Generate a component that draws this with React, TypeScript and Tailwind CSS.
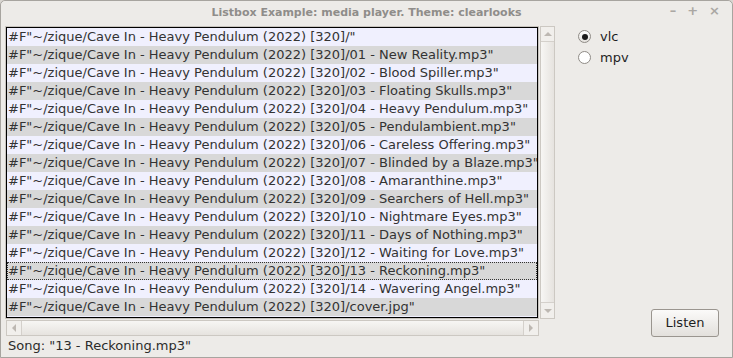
const SONGS = [
  "",
  "01 - New Reality.mp3",
  "02 - Blood Spiller.mp3",
  "03 - Floating Skulls.mp3",
  "04 - Heavy Pendulum.mp3",
  "05 - Pendulambient.mp3",
  "06 - Careless Offering.mp3",
  "07 - Blinded by a Blaze.mp3",
  "08 - Amaranthine.mp3",
  "09 - Searchers of Hell.mp3",
  "10 - Nightmare Eyes.mp3",
  "11 - Days of Nothing.mp3",
  "12 - Waiting for Love.mp3",
  "13 - Reckoning.mp3",
  "14 - Wavering Angel.mp3",
  "cover.jpg",
];

const PREFIX = '#F"~/zique/Cave In - Heavy Pendulum (2022) [320]/';

function Arrow({ dir }: { dir: "up" | "down" | "left" | "right" }) {
  const pts = {
    up: "1,6 5,2 9,6",
    down: "1,2 5,6 9,2",
    left: "6,1 2,5 6,9",
    right: "2,1 6,5 2,9",
  }[dir];
  const horiz = dir === "left" || dir === "right";
  return (
    <svg width={horiz ? 8 : 10} height={horiz ? 10 : 8} viewBox={horiz ? "0 0 8 10" : "0 0 10 8"}>
      <polygon points={pts} fill="#bdb8b2" />
    </svg>
  );
}

export default function App() {
  const selected = 13;
  return (
    <div
      className="w-[733px] h-[358px] bg-[#d9d6d1] overflow-hidden"
      style={{ fontFamily: '"DejaVu Sans", sans-serif' }}
    >
      <div className="w-[733px] h-[358px] flex flex-col rounded-t-[5px] border border-[#a7a49f] bg-[#edebe8]">
        {/* title bar */}
        <div className="h-[21px] flex items-center relative shrink-0 bg-[#edebe8] rounded-t-[5px]">
          <div className="flex-1 text-center text-[11px] font-bold text-[#8f8d8a] leading-none pt-[1px]">
            Listbox Example: media player. Theme: clearlooks
          </div>
          <div className="absolute right-[12px] top-[3px] flex gap-[11px] text-[13px] text-[#aaa7a3] font-bold leading-none">
            <span>–</span>
            <span>+</span>
            <span>×</span>
          </div>
        </div>

        <div className="flex flex-1">
          {/* left column */}
          <div className="flex flex-col pl-[4px] pt-[4px]">
            <div className="flex">
              <div className="w-[534px] h-[293px] border border-[#c8c4be] p-0">
                <div className="w-full h-full border border-black bg-[#f0f0fe] overflow-hidden">
                  {SONGS.map((s, i) => (
                    <div
                      key={i}
                      className={`h-[18px] pl-[1px] text-[13px] leading-[18px] text-[#333333] whitespace-nowrap ${
                        i % 2 ? "bg-[#d8d8d8]" : "bg-[#f0f0fe]"
                      } ${i === selected ? "outline outline-1 outline-dotted outline-[#333] -outline-offset-1" : ""}`}
                    >
                      {PREFIX + s + '"'}
                    </div>
                  ))}
                </div>
              </div>
              {/* vertical scrollbar */}
              <div className="w-[15px] h-[293px] ml-[1px] flex flex-col border border-[#ccc8c2] bg-[#e6e3df]">
                <div className="h-[15px] flex items-center justify-center border-b border-[#d4d0cb] bg-[#f1efec]">
                  <Arrow dir="up" />
                </div>
                <div className="flex-1 border-b border-[#d4d0cb] bg-gradient-to-r from-[#f7f6f4] to-[#e6e3df]" />
                <div className="h-[15px] flex items-center justify-center bg-[#f1efec]">
                  <Arrow dir="down" />
                </div>
              </div>
            </div>
            {/* horizontal scrollbar */}
            <div className="w-[533px] h-[16px] mt-[1px] ml-[1px] flex border border-[#ccc8c2] bg-[#e6e3df]">
              <div className="w-[15px] flex items-center justify-center border-r border-[#d4d0cb] bg-[#f1efec]">
                <Arrow dir="left" />
              </div>
              <div className="flex-1 bg-gradient-to-b from-[#f7f6f4] to-[#e6e3df] border-r border-[#d4d0cb]" />
              <div className="w-[14px] flex items-center justify-center bg-[#f1efec]">
                <Arrow dir="right" />
              </div>
            </div>
            <div className="text-[13px] text-[#2b2b2b] leading-none mt-[3px] pl-[3px]">
              Song: "13 - Reckoning.mp3"
            </div>
          </div>

          {/* right column */}
          <div className="flex-1 flex flex-col pt-[4px] pl-[23px] pr-[13px]">
            <label className="flex items-center h-[21px] gap-[9px] text-[13px] text-[#1e1e1e]">
              <span className="w-[13px] h-[13px] rounded-full border border-[#8f8b86] bg-gradient-to-b from-[#ffffff] to-[#e4e1dd] flex items-center justify-center">
                <span className="w-[6px] h-[6px] rounded-full bg-[#1a1a1a]" />
              </span>
              vlc
            </label>
            <label className="flex items-center h-[21px] gap-[9px] text-[13px] text-[#1e1e1e]">
              <span className="w-[13px] h-[13px] rounded-full border border-[#8f8b86] bg-white" />
              mpv
            </label>
            <div className="flex-1" />
            <div className="flex justify-end mb-[20px]">
              <button className="w-[68px] h-[28px] rounded-[3px] border border-[#9a958f] bg-gradient-to-b from-[#fbfaf9] to-[#e3e0dc] text-[13px] text-[#1e1e1e]">
                Listen
              </button>
            </div>
          </div>
        </div>
      </div>
    </div>
  );
}
